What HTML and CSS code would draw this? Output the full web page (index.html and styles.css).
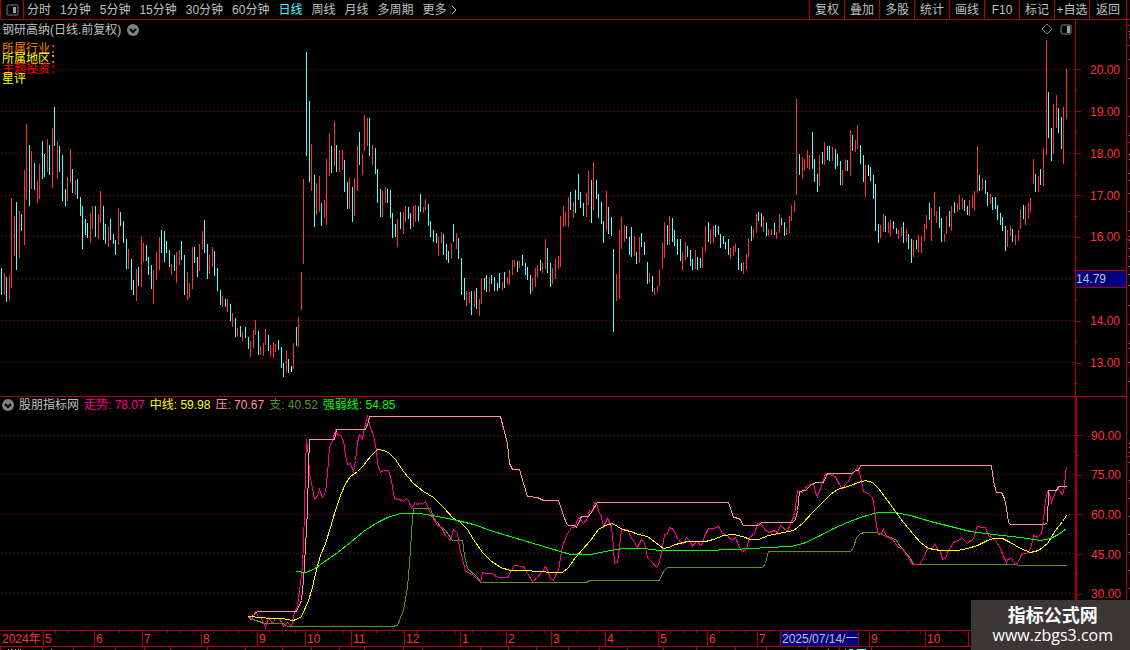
FILE: index.html
```html
<!DOCTYPE html>
<html lang="zh-CN">

<head>
    <meta charset="UTF-8">
    <meta name="viewport" content="width=device-width, initial-scale=1.0">
    <title>钢研高纳 日线</title>
    <link rel="stylesheet" href="styles.css">
</head>

<body>
    <header class="topbar">
        <button class="layout-btn" aria-label="布局">
            <svg width="13" height="12" viewBox="0 0 13 12">
                <rect class="icon-frame" x="1" y="1" width="11" height="10" rx="1" />
                <rect class="icon-fill" x="7" y="3" width="3" height="6" />
            </svg>
        </button>
        <nav class="periods">
            <button>分时</button>
            <button>1分钟</button>
            <button>5分钟</button>
            <button>15分钟</button>
            <button>30分钟</button>
            <button>60分钟</button>
            <button class="active">日线</button>
            <button>周线</button>
            <button>月线</button>
            <button>多周期</button>
            <button class="more">更多
                <svg width="6" height="10" viewBox="0 0 6 10">
                    <path d="M1 1l4 4l-4 4" />
                </svg>
            </button>
        </nav>
        <div class="tools">
            <button>复权</button>
            <button>叠加</button>
            <button>多股</button>
            <button>统计</button>
            <button>画线</button>
            <button>F10</button>
            <button>标记</button>
            <button>+自选</button>
            <button>返回</button>
        </div>
    </header>

    <main class="charts">
        <section class="pane price-pane">
            <svg class="plot" id="pricePlot" viewBox="0 0 1075 376" preserveAspectRatio="none"></svg>
            <div class="pane-title">
                <span>钢研高纳(日线.前复权)</span>
                <button class="round-btn" aria-label="展开">
                    <svg width="12" height="12" viewBox="0 0 12 12">
                        <circle cx="6" cy="6" r="6" />
                        <path d="M3 5l3 3l3 -3" />
                    </svg>
                </button>
            </div>
            <div class="tags">
                <p class="orange">所属行业：</p>
                <p class="yellow">所属地区：</p>
                <p class="red">主题投资：</p>
                <p class="yellow">星评</p>
            </div>
            <div class="pane-tools">
                <svg width="11" height="11" viewBox="0 0 11 11">
                    <path class="diamond" d="M5 0l5 5l-5 5l-5 -5z" />
                </svg>
                <svg width="12" height="11" viewBox="0 0 12 11">
                    <rect class="icon-frame" x="1" y="1" width="10" height="9" rx="1" />
                    <rect class="icon-fill" x="7" y="2" width="3" height="7" />
                </svg>
            </div>
        </section>
        <ol class="scale price-scale">
            <li>20.00</li>
            <li>19.00</li>
            <li>18.00</li>
            <li>17.00</li>
            <li>16.00</li>
            <li class="current"><span>14.79</span></li>
            <li>14.00</li>
            <li>13.00</li>
        </ol>

        <section class="pane index-pane">
            <svg class="plot" id="indexPlot" viewBox="0 397 1075 233" preserveAspectRatio="none"></svg>
            <div class="legend">
                <button class="round-btn" aria-label="展开">
                    <svg width="12" height="12" viewBox="0 0 12 12">
                        <circle cx="6" cy="6" r="6" />
                        <path d="M3 5l3 3l3 -3" />
                    </svg>
                </button>
                <span>股朋指标网</span>
                <span class="magenta">走势: 78.07</span>
                <span class="yellow">中线: 59.98</span>
                <span class="pink">压: 70.67</span>
                <span class="olive">支: 40.52</span>
                <span class="lime">强弱线: 54.85</span>
            </div>
        </section>
        <ol class="scale index-scale">
            <li>90.00</li>
            <li>75.00</li>
            <li>60.00</li>
            <li>45.00</li>
            <li>30.00</li>
        </ol>
        <svg class="edge" id="edge" viewBox="0 0 3 610" preserveAspectRatio="none"></svg>
    </main>

    <ol class="timeline" id="timeline"></ol>
    <svg class="strip" id="strip" viewBox="0 0 1130 3" preserveAspectRatio="none"></svg>

    <div class="watermark">
        <strong>指标公式网</strong>
        <span>www.zbgs3.com</span>
    </div>

    <script src="script.js"></script>
</body>

</html>
```
FILE: styles.css
```css
* {
    margin: 0;
    padding: 0;
    box-sizing: border-box;
}

body {
    display: flex;
    flex-direction: column;
    min-height: 100vh;
    position: relative;
    background-color: #000;
    color: #c0c0c0;
    font-family: "Liberation Sans", "Noto Sans CJK SC", sans-serif;
    font-size: 12px;
    line-height: 16px;
    overflow: hidden;
}

button {
    background: none;
    border: none;
    color: inherit;
    font: inherit;
    white-space: nowrap;
    cursor: pointer;
}

ol {
    list-style: none;
}

svg {
    display: block;
}

/* top bar */

.topbar {
    display: flex;
    height: 20px;
    border-bottom: 1px solid #b40000;
    padding-right: 3px;
}

.layout-btn {
    width: 24px;
    display: flex;
    justify-content: center;
    align-items: center;
    border-left: 1px solid #b40000;
    border-right: 1px solid #b40000;
}

.icon-frame {
    fill: none;
    stroke: #808080;
}

.icon-fill {
    fill: #a0a0a0;
}

.periods {
    flex: 1;
    display: flex;
    align-items: center;
    gap: 9px;
    padding-left: 3px;
}

.periods .active {
    color: #54ffff;
}

.more {
    display: flex;
    align-items: center;
    gap: 4px;
}

.more path {
    fill: none;
    stroke: #c0c0c0;
}

.tools {
    display: flex;
    border-right: 1px solid #b40000;
}

.tools button {
    width: 35px;
    border-left: 1px solid #b40000;
}

.tools button:last-child {
    width: 37px;
}

/* charts */

.charts {
    flex: 1;
    display: grid;
    grid-template-columns: 1fr 51px 4px;
    grid-template-rows: 376fr 234fr;
}

.pane {
    position: relative;
    min-height: 0;
}

.index-pane {
    border-top: 1px solid #b40000;
}

.plot {
    position: absolute;
    width: 100%;
    height: 100%;
    shape-rendering: crispEdges;
}

.grid-line {
    stroke: #a01010;
    stroke-dasharray: 1 3;
}

.up {
    fill: #ff3232;
}

.down {
    fill: #54ffff;
}

.flat {
    fill: #fff;
}

.curve {
    fill: none;
    stroke: currentColor;
}

.orange {
    color: #ff8000;
}

.yellow {
    color: #ffff00;
}

.red {
    color: #ff0000;
}

.magenta {
    color: #ff0090;
}

.pink {
    color: #ff9696;
}

.olive {
    color: #559622;
}

.lime {
    color: #00ff00;
}

.pane-title {
    position: absolute;
    top: 2px;
    left: 2px;
    display: flex;
    align-items: center;
    gap: 6px;
}

.round-btn circle {
    fill: #808080;
}

.round-btn path {
    fill: none;
    stroke: #000;
    stroke-width: 2;
}

.tags {
    position: absolute;
    top: 24px;
    left: 2px;
    line-height: 10px;
}

.pane-tools {
    position: absolute;
    top: 4px;
    right: 3px;
    display: flex;
    gap: 7px;
}

.diamond {
    fill: none;
    stroke: #808080;
}

.legend {
    position: absolute;
    top: 0;
    left: 2px;
    display: flex;
    align-items: center;
    gap: 5px;
    white-space: nowrap;
}

/* value scales */

.scale {
    display: grid;
    grid-auto-rows: 1fr;
    border-left: 1px solid #b40000;
    color: #ff3232;
}

.price-scale {
    grid-column: 2;
    grid-row: 1;
    padding: 29px 0 12px;
}

.index-scale {
    grid-column: 2;
    grid-row: 2;
    padding: 19px 0 16px;
    border-top: 1px solid #b40000;
    border-left-width: 2px;
}

.scale li {
    display: flex;
    align-items: center;
    gap: 9px;
    background: linear-gradient(#b40000, #b40000) left bottom / 2px 1px no-repeat;
}

.scale li::before {
    content: "";
    width: 5px;
    height: 1px;
    background-color: #b40000;
}

.scale .current::before {
    display: none;
}

.current span {
    flex: 1;
    border: 1px solid #b40000;
    border-width: 1px 0;
    background-color: #000080;
    color: #c0c0c0;
}

.edge {
    grid-column: 3;
    grid-row: 1 / 3;
    width: 4px;
    height: 100%;
    border-left: 1px solid #b40000;
    shape-rendering: crispEdges;
}

.mark-red {
    fill: #b40000;
}

.mark-light {
    fill: #c0c0c0;
}

.mark-cyan {
    fill: #54ffff;
}

/* time axis */

.timeline {
    display: flex;
    height: 17px;
    border-top: 1px solid #b40000;
    border-bottom: 1px solid #b40000;
    color: #ff3232;
    line-height: 16px;
}

.timeline li {
    flex-basis: 0;
    min-width: 0;
    text-indent: 2px;
    white-space: nowrap;
}

/* backgrounds instead of borders, so the widths keep their shares */
.timeline .month {
    background:
        linear-gradient(#b40000, #b40000) left top / 1px 100% no-repeat,
        repeating-linear-gradient(90deg, transparent 0 12px, #b40000 12px 13px) left top / 100% 2px no-repeat;
}

.timeline .today {
    background:
        linear-gradient(#b40000, #b40000) left top / 1px 100% no-repeat,
        linear-gradient(#b40000, #b40000) right top / 1px 100% no-repeat,
        #000080;
    color: #c0c0c0;
}

.strip {
    width: 100%;
    height: 3px;
    shape-rendering: crispEdges;
}

.watermark {
    position: absolute;
    right: 0;
    bottom: 0;
    display: flex;
    flex-direction: column;
    align-items: center;
    padding: 4px 17px 5px 22px;
    background-color: #3c3737;
    color: #fff;
}

.watermark strong {
    font-family: "Noto Sans CJK SC", sans-serif;
    font-size: 18px;
    line-height: 21px;
}

.watermark span {
    font-family: "Open Sans", sans-serif;
    font-size: 16px;
    line-height: 20px;
}
```
FILE: script.js
```javascript
const SVG_NS = "http://www.w3.org/2000/svg";

// one entry per day: direction (r = up, c = down, w = flat), x, high, low
const bars = `
c1,268,295 r4,273,295 c6,277,302 r9,275,300 r11,198,288 r14,216,256 c16,202,270 r19,211,258 c21,214,231
r24,170,245 r26,124,200 c29,145,206 r31,151,189 c34,163,190 r37,181,203 r39,164,199 c42,141,179 c44,154,177
r47,139,172 c49,145,175 r52,128,188 c54,107,146 r57,141,179 c59,146,172 c62,155,201 c65,189,206 r67,177,201
r70,149,182 c72,169,193 r75,180,195 c77,179,199 c80,197,216 c82,206,249 c85,219,235 c87,223,238 r90,213,243
r92,206,229 c95,206,237 r98,214,239 r100,191,223 c103,206,240 c105,224,244 r108,227,247 c110,219,240
c113,234,244 c115,240,255 r118,208,245 c120,212,226 c123,221,243 c126,239,269 r128,249,269 c131,259,290
c133,280,295 r136,269,301 c138,267,286 r141,236,287 r143,243,262 c146,245,261 c148,257,275 c151,265,289
r153,270,304 r156,252,280 r159,237,270 c161,230,253 c164,231,262 c166,241,253 c169,250,267 r171,264,275
c174,255,271 r176,252,283 r179,250,265 c181,241,260 c184,255,295 r187,272,300 r189,283,298 r192,247,289
c194,247,263 c197,257,277 r199,244,271 r202,231,249 c204,220,253 c207,244,279 r209,255,274 r212,247,267
c214,251,276 c217,268,291 c220,290,305 r222,296,307 c225,299,307 r227,299,312 c230,304,321 r232,313,327
c235,318,337 r237,328,336 c240,326,337 r242,332,341 c245,327,338 c248,337,349 r250,341,357 r253,330,348
r255,320,335 c258,331,355 r260,346,355 r263,343,356 r265,329,345 c268,335,351 r270,345,356 r273,342,358
r275,344,352 c278,340,350 c281,347,368 c283,363,377 r286,351,372 c288,359,373 w291,366,372 r293,343,369
c296,327,346 r298,317,347 r301,272,310 r303,179,264 c306,52,156 c309,101,182 r311,144,191 c314,175,227
r316,183,215 r319,176,212 c321,203,226 r324,200,218 r326,159,225 r329,133,176 c331,146,173 r334,121,166
c336,145,172 r339,150,172 r342,150,170 c344,160,192 c347,182,209 r349,178,209 c352,187,222 r354,178,216
r357,146,191 c359,132,165 r362,154,175 r364,115,151 r367,118,146 c369,118,156 r372,145,165 c375,148,174
c377,169,203 c380,189,217 r382,191,217 r385,187,203 c387,189,203 c390,190,218 c392,213,238 c395,224,237
r397,219,247 c400,212,229 r403,212,234 r405,206,222 c408,207,219 c410,213,229 r413,206,227 r415,205,222
c418,206,221 c420,194,212 r423,207,213 r425,199,210 c428,204,226 c430,221,237 c433,230,242 c436,233,243
r438,237,256 r441,232,243 c443,234,255 c446,244,260 c448,251,263 r451,243,259 c453,224,242 r456,233,249
c458,238,259 c461,258,295 c464,278,300 r466,291,306 r469,292,303 c471,291,315 r474,291,307 c476,288,309
r479,299,316 r481,279,304 c484,278,290 c486,275,292 r489,277,292 c491,275,284 c494,277,291 c497,283,291
c499,273,288 r502,282,290 c504,272,288 r507,277,284 r509,270,285 r512,260,275 r514,260,267 c517,261,272
r519,261,268 c522,255,266 c525,263,275 c527,267,280 c530,275,294 r532,278,291 r535,268,287 r537,265,277
c540,260,271 r542,263,273 r545,239,269 c547,248,273 c550,263,287 r552,268,284 r555,259,279 r558,256,269
r560,216,267 r563,206,227 r565,212,226 r568,197,227 c570,192,210 r573,202,218 c575,190,213 c578,174,200
c580,192,208 c583,203,216 r586,193,217 r588,171,205 c591,180,223 r593,162,210 c596,180,199 c598,194,218
c601,202,224 c603,221,243 r606,191,231 c608,207,234 c611,217,236 c613,249,332 r616,274,301 r619,230,299
r621,217,249 r624,225,242 c626,226,239 c629,237,255 c631,227,257 r634,236,256 c636,252,264 r639,237,263
c641,233,247 c644,242,255 c647,262,284 r649,273,283 c652,276,292 r654,288,295 r657,286,292 r659,270,286
r662,243,269 r664,222,258 c667,225,245 r669,216,245 c672,218,242 c674,230,246 c677,239,255 c680,239,261
r682,252,270 r685,242,260 c687,246,257 c690,250,266 c692,259,270 r695,250,269 c697,257,270 c700,258,268
r702,247,268 r705,226,252 c708,222,242 r710,229,244 r713,226,243 c715,225,237 c718,226,235 c720,234,248
c723,236,244 c725,242,249 c728,239,255 r730,248,259 r733,246,256 r735,244,252 c738,248,270 c741,263,271
r743,262,274 r746,254,270 r748,238,257 c751,226,241 r753,229,238 r756,214,233 c758,212,221 c761,213,227
r763,216,232 c766,223,236 r768,229,236 r771,229,235 c774,223,235 r776,232,239 r779,214,233 c781,218,225
c784,222,236 r786,228,235 r789,216,233 r791,205,221 r794,201,212 r796,99,195 c799,154,175 r802,157,179
r804,159,171 r807,150,168 r809,155,170 c812,132,169 c814,159,182 c817,174,192 r819,155,186 c822,152,164
r824,142,165 c827,146,160 c829,146,161 r832,147,161 c835,149,169 c837,154,166 c840,161,185 r842,170,185
r845,159,171 c847,160,171 r850,130,176 c852,135,151 r855,140,152 r857,125,149 c860,145,164 c863,155,182
r865,165,197 w868,165,176 c870,167,181 c873,175,199 c875,184,231 c878,224,243 r880,225,238 r883,214,232
c885,216,232 r888,222,233 r890,220,236 c893,221,229 c896,228,234 r898,230,239 r901,227,236 c903,222,243
r906,229,242 c908,234,249 c911,239,263 r913,240,257 c916,240,249 r918,235,253 r921,236,253 r924,224,241
r926,215,229 c929,203,220 r931,208,241 r934,192,216 r936,211,223 c939,207,228 c941,218,242 r944,234,242
r946,216,234 c949,211,227 r951,206,231 c954,202,213 r957,203,212 r959,195,210 r962,198,209 c964,200,211
c967,206,215 r969,200,216 r972,195,208 r974,191,211 r977,146,193 c979,175,191 r982,178,190 c985,180,194
c987,192,206 r990,194,204 c992,197,210 c995,197,209 c997,205,220 c1000,213,225 c1002,217,231 c1005,226,251
r1007,230,247 r1010,226,236 c1012,229,242 r1015,235,245 r1018,230,241 r1020,209,229 c1023,205,219
r1025,206,225 r1028,203,219 r1030,198,212 r1033,159,184 c1035,174,192 r1038,176,192 c1040,169,185
r1043,148,186 r1046,40,155 c1048,92,138 c1051,128,161 r1053,104,154 r1056,95,128 c1058,108,133
c1061,117,149 r1063,107,164 r1066,69,119`;

const curves = {
    olive: `249,617 255,620 259,621 263,623 283,623 287,626 391,626 397,625 402,612 404,605 407,587 409,563
        411,533 412,517 413,508 430,508 433,517 440,526 445,530 452,540 462,540 464,555 467,568 475,575 481,582
        587,582 588,580 659,580 663,571 667,567 762,567 765,563 768,551 850,551 853,547 856,537 860,533 864,532
        878,532 883,535 890,537 895,539 900,546 906,553 910,558 913,564 1016,564 1017,565 1066,565`,
    magenta: `248,617 251,620 255,611 258,616 261,618 265,627 268,617 272,623 275,618 279,618 283,626 287,622
        291,626 294,612 297,605 299,590 302,567 304,513 305,467 306,439 308,455 309,473 312,488 314,499 317,495
        319,489 322,497 325,492 327,473 329,447 332,440 335,430 337,434 340,435 343,440 345,455 347,464 350,463
        353,471 355,460 357,442 359,434 362,439 364,427 367,416 370,427 373,435 376,450 377,463 380,472 383,470
        388,470 391,480 394,498 402,500 403,501 406,498 408,500 411,508 413,505 415,502 417,505 419,502 422,504
        425,501 428,508 432,517 437,525 441,527 445,535 450,540 453,529 457,533 459,547 462,558 465,571 472,574
        477,579 480,582 482,572 487,573 492,573 497,577 507,577 511,570 514,565 523,566 527,573 532,581 537,577
        542,571 545,566 548,572 550,578 553,580 555,575 558,570 560,557 562,546 567,533 571,527 574,527 578,517
        583,523 587,518 589,510 592,511 594,502 596,503 598,510 601,517 603,526 607,518 611,526 613,547 614,563
        617,562 619,547 621,529 627,529 630,536 634,542 637,547 641,539 644,542 647,557 652,562 656,567 658,564
        661,553 664,534 667,533 669,527 673,529 677,538 682,544 686,537 689,540 692,546 696,541 701,545 704,536
        708,528 713,528 718,526 722,533 727,535 731,540 735,537 738,545 742,551 746,549 749,537 754,533 757,523
        761,524 765,530 769,532 773,530 777,532 780,525 787,531 790,523 794,515 797,490 802,492 807,485 813,483
        815,492 817,496 821,485 825,473 829,474 835,476 838,482 842,489 845,484 848,481 852,472 855,471 857,466
        860,476 863,491 868,493 872,497 874,508 876,525 878,534 881,533 883,529 886,536 892,539 897,546 902,549
        907,556 912,564 919,564 923,558 927,548 932,548 934,543 937,548 940,551 942,559 945,558 947,552 950,547
        953,542 962,538 967,543 973,538 977,525 980,527 985,527 988,535 992,538 995,540 1000,548 1003,556
        1006,562 1007,559 1011,558 1015,564 1017,563 1021,554 1028,552 1031,545 1033,535 1037,537 1041,533
        1043,520 1045,500 1047,491 1049,493 1051,502 1054,494 1057,487 1059,490 1062,494 1064,487 1065,473
        1066,467`,
    yellow: `248,616 260,617 270,618 282,618 292,620 296,619 301,616 305,607 308,600 312,587 315,573 320,555
        325,543 330,527 335,510 340,495 345,483 350,476 357,471 363,465 370,456 377,449 383,450 388,452 395,459
        403,471 413,483 423,491 433,497 443,507 453,518 460,522 467,529 473,539 482,552 490,560 500,567 510,570
        523,570 540,571 550,572 562,572 568,567 575,557 582,549 590,540 598,529 605,525 612,523 622,529 630,531
        638,534 647,536 655,542 663,548 668,547 675,544 687,541 705,541 713,539 723,535 733,534 742,536 750,539
        758,539 768,535 783,532 793,530 802,523 812,512 820,504 830,494 837,489 850,485 858,482 865,480 872,482
        878,488 887,500 895,511 903,522 913,534 920,542 928,548 940,550 957,550 967,548 977,545 987,540 993,538
        1002,538 1010,542 1020,548 1030,552 1038,550 1047,543 1055,530 1062,521 1066,515`,
    pink: `250,616 253,615 257,611 296,611 301,600 303,580 305,547 307,510 308,467 309,439 334,439 336,429
        365,429 368,421 369,416 500,416 503,428 507,443 509,463 512,469 519,469 523,483 527,496 537,497 543,500
        558,500 563,515 566,523 568,525 574,525 576,527 581,516 588,516 592,510 597,502 728,502 733,517 739,518
        743,525 758,525 761,522 792,522 795,519 797,510 799,491 805,490 810,485 815,482 823,482 827,473 852,473
        855,470 858,470 860,465 991,465 992,473 994,485 996,492 1001,492 1004,498 1006,508 1008,522 1010,524
        1044,524 1047,522 1048,490 1056,490 1058,486 1066,486`,
    lime: `296,571 305,572 313,569 323,562 337,552 350,542 363,531 377,522 387,517 400,513 420,513 437,516
        457,520 473,524 493,531 513,537 533,543 550,548 560,551 570,554 590,554 600,552 610,550 623,548 643,548
        660,550 707,550 730,549 753,548 767,547 790,546 803,543 820,535 833,528 847,522 860,517 877,512 895,512
        910,515 930,521 950,526 970,531 993,534 1020,537 1040,540 1050,538 1058,534 1066,528`
};

// label, width share, class
const months = [
    ["2024年", 43, ""], ["5", 51, "month"], ["6", 48, "month"], ["7", 59, "month"], ["8", 56, "month"],
    ["9", 48, "month"], ["10", 46, "month"], ["11", 53, "month"], ["12", 56, "month"], ["1", 46, "month"],
    ["2", 45, "month"], ["3", 54, "month"], ["4", 53, "month"], ["5", 49, "month"], ["6", 50, "month"],
    ["7", 23, "month"], ["2025/07/14/一", 79, "today"], ["", 10, ""], ["9", 56, "month"], ["10", 43, "month"],
    ["11", 162, "month"]
];

const classNames = { r: "up", c: "down", w: "flat" };

function addShape(parent, tag, attrs) {
    const el = document.createElementNS(SVG_NS, tag);
    for (const name in attrs) {
        el.setAttribute(name, attrs[name]);
    }
    parent.appendChild(el);
}

function addRect(parent, className, x, y, width, height) {
    addShape(parent, "rect", { class: className, x, y, width, height });
}

function addGrid(parent, rows) {
    rows.forEach(y => addShape(parent, "line", { class: "grid-line", x1: 1, x2: 1075, y1: y + 0.5, y2: y + 0.5 }));
}

// price pane, starts 20px below the top of the page
const pricePlot = document.getElementById("pricePlot");
addGrid(pricePlot, [49, 91, 133, 175, 216, 258, 300, 342]);
bars.trim().split(/\s+/).forEach(item => {
    const [x, high, low] = item.slice(1).split(",").map(Number);
    addRect(pricePlot, classNames[item[0]], x, high - 20, 1, low - high);
});

// indicator pane
const indexPlot = document.getElementById("indexPlot");
addGrid(indexPlot, [435, 474, 514, 553, 593]);
for (const name in curves) {
    const points = curves[name].trim().split(/\s+/)
        .map(p => p.split(",").map(n => Number(n) + 0.5).join(","))
        .join(" ");
    addShape(indexPlot, "polyline", { class: "curve " + name, points });
}

// time axis
const timeline = document.getElementById("timeline");
months.forEach(([label, share, className]) => {
    const li = document.createElement("li");
    li.textContent = label;
    li.className = className;
    li.style.flexGrow = share;
    timeline.appendChild(li);
});

// marks along the right edge
const edge = document.getElementById("edge");
[5, 25, 122, 219, 436].forEach(y => addRect(edge, "mark-red", 0, y, 3, 1));
[11, 14, 17, 39, 58, 96, 115, 134, 139, 153, 160, 173, 191, 210, 216, 220, 228, 236, 246, 254, 265, 285, 304,
    323, 328, 342, 361, 423, 427, 432, 442, 460, 478, 496, 514, 532, 550, 568]
    .forEach(y => addRect(edge, "mark-light", 2, y, 1, 1));

// ticks under the time axis
const strip = document.getElementById("strip");
[0, 42, 73, 115, 144, 170, 207, 245, 282, 311, 339, 364, 403, 422, 480, 508, 536, 568, 599, 627, 663, 696, 735,
    766, 807, 839, 871].forEach(x => addRect(strip, "mark-red", x, 0, 1, 3));
[8, 11, 15, 18, 20, 51, 828, 845].forEach(x => addRect(strip, "mark-light", x, 2, 1, 1));
addRect(strip, "mark-cyan", 849, 2, 4, 1);
addRect(strip, "mark-cyan", 857, 2, 9, 1);
```
